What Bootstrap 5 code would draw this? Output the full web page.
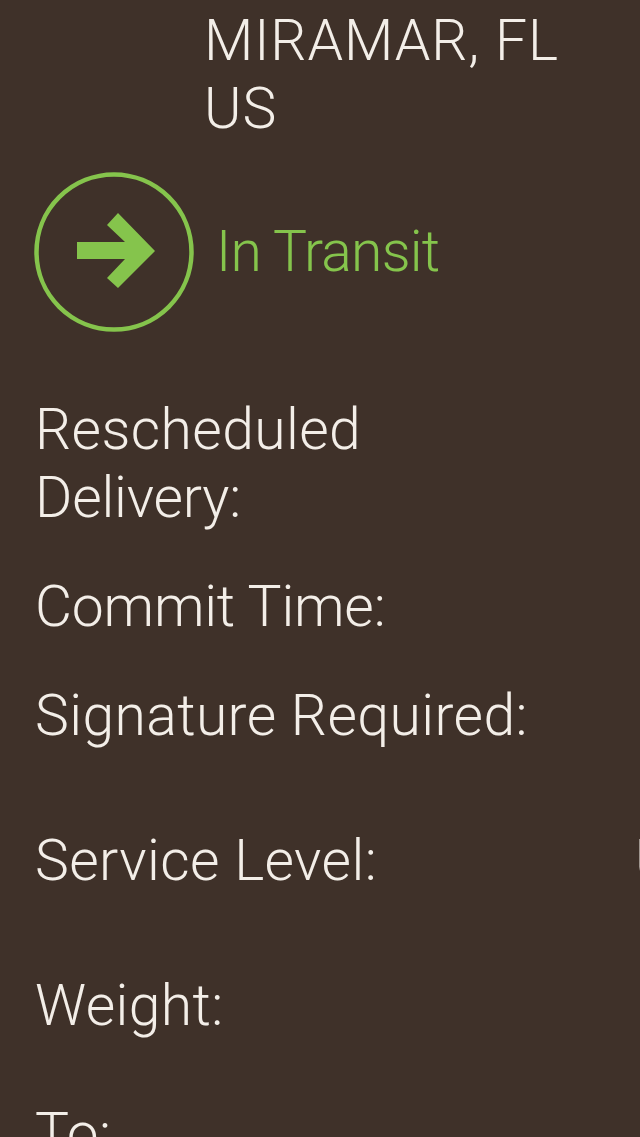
<!DOCTYPE html>
<html lang="en">
<head>
    <meta charset="UTF-8">
    <meta name="viewport" content="width=device-width, initial-scale=1.0">
    <title>Tracking Detail</title>
    <link href="https://cdn.jsdelivr.net/npm/bootstrap@5.3.3/dist/css/bootstrap.min.css" rel="stylesheet">
    <style>
        html, body {
            height: 1137px;
            overflow: hidden;
        }

        body {
            background: #3f3129;
            color: #f3eee8;
            font-family: Roboto, "Liberation Sans", Arial, sans-serif;
            font-size: 57px;
            font-weight: 300;
            line-height: 68px;
        }

        .city-block {
            padding: 7px 0 0 204px;
            letter-spacing: .9px;
        }

        .status-row {
            padding: 29px 0 0 34px;
            gap: 22px;
            color: #85c44c;
            letter-spacing: -.8px;
        }

        .status-icon {
            width: 160px;
            height: 160px;
            flex: none;
        }

        .detail-list {
            padding: 64px 0 0 35px;
            letter-spacing: .4px;
        }

        .detail-row {
            position: relative;
        }

        .gap-short { margin-top: 41px; }
        .gap-wide { margin-top: 77px; }
        .gap-last { margin-top: 60px; }
        .tight-label { letter-spacing: -.2px; }

        /* value column starts past the right edge, only the first stroke shows */
        .value-sliver {
            position: absolute;
            left: 600px;
            top: 0;
        }
    </style>
</head>
<body>
    <div class="city-block">MIRAMAR, FL<br>US</div>

    <div class="status-row d-flex align-items-center">
        <svg class="status-icon" viewBox="0 0 160 160" fill="none">
            <circle cx="80" cy="80" r="77.5" stroke="#85c44c" stroke-width="4.5"/>
            <path d="M43 70H91L73 53 84 41 121 79 84 116 73 106 91 87H43Z" fill="#85c44c"/>
        </svg>
        <div>In Transit</div>
    </div>

    <div class="detail-list">
        <div class="detail-row">Rescheduled<br><span class="tight-label">Delivery:</span></div>
        <div class="detail-row gap-short tight-label">Commit Time:</div>
        <div class="detail-row gap-short">Signature Required:</div>
        <div class="detail-row gap-wide">Service Level:<span class="value-sliver">U</span></div>
        <div class="detail-row gap-wide">Weight:</div>
        <div class="detail-row gap-last">To:</div>
    </div>

    <script src="https://cdn.jsdelivr.net/npm/bootstrap@5.3.3/dist/js/bootstrap.bundle.min.js"></script>
</body>
</html>
